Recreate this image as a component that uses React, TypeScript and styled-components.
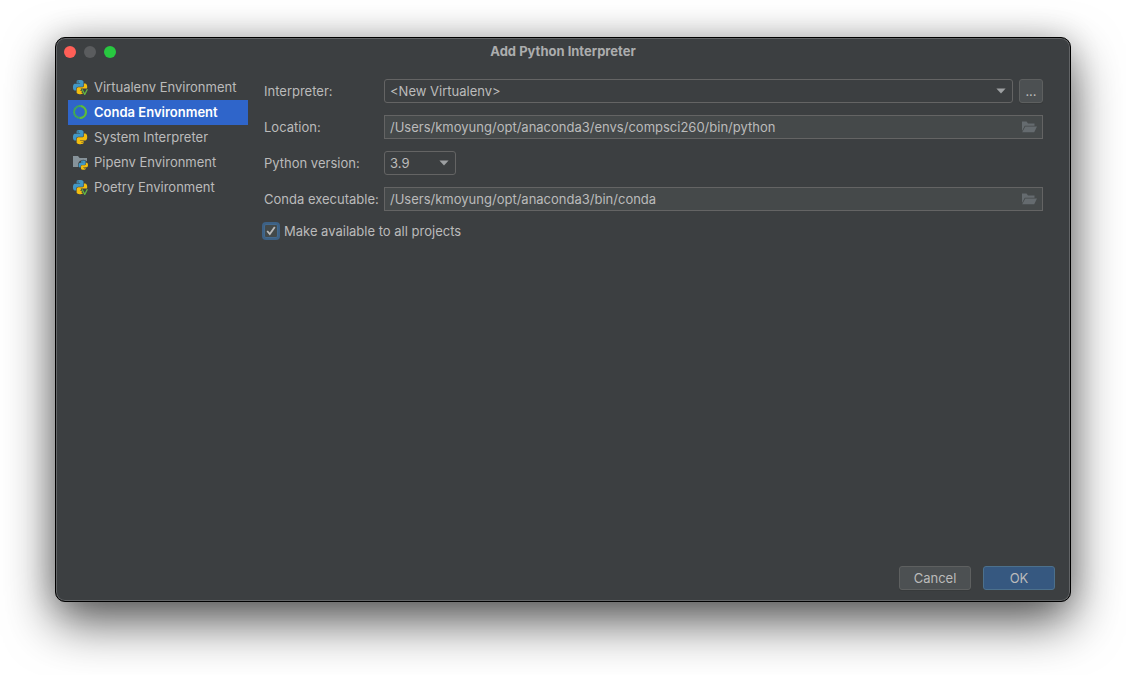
import React from "react";
import styled, { createGlobalStyle, css } from "styled-components";

const GlobalStyle = createGlobalStyle`
  * { box-sizing: border-box; }
  body {
    margin: 0;
    background: #ffffff;
    color: #bbbbbb;
    font: 13px/16px Inter, "Liberation Sans", sans-serif;
  }
  button, input, select { font: inherit; color: inherit; margin: 0; }
`;

const Desktop = styled.div`
  display: flex;
  min-height: 100vh;
  padding: 37px 55px 73px;
`;

const Dialog = styled.main`
  flex: 1;
  display: flex;
  flex-direction: column;
  border: 1px solid #000000;
  border-radius: 10px;
  background: #3c3f41;
  box-shadow: inset 0 0 0 1px #636567, 0 20px 50px rgba(0, 0, 0, 0.65), 0 0 30px rgba(0, 0, 0, 0.16);
`;

const TitleBar = styled.header`
  display: grid;
  grid-template-columns: 1fr auto 1fr;
  align-items: center;
  height: 28px;
  padding: 0 8px;
`;

const WindowControls = styled.div`
  display: flex;
  gap: 8px;
`;

const WindowButton = styled.button<{ $color: string }>`
  width: 12px;
  height: 12px;
  padding: 0;
  border: 0;
  border-radius: 50%;
  background: ${(p) => p.$color};
`;

const Title = styled.h1`
  margin: 0;
  padding-bottom: 2px;
  font-size: 13px;
  line-height: 16px;
  font-weight: 700;
  color: #acadae;
`;

const Body = styled.div`
  flex: 1;
  display: flex;
  gap: 16px;
  padding: 9px 27px 0 12px;
`;

const Sidebar = styled.nav`
  flex: none;
  width: 180px;
  display: flex;
  flex-direction: column;
`;

const SidebarItem = styled.button<{ $selected?: boolean }>`
  display: flex;
  align-items: center;
  gap: 6px;
  height: 25px;
  padding: 0 4px 1px;
  border: 0;
  background: ${(p) => (p.$selected ? "#2f65ca" : "transparent")};
  color: ${(p) => (p.$selected ? "#ffffff" : "#bbbbbb")};
  font-weight: ${(p) => (p.$selected ? 600 : 400)};
  text-align: left;
  white-space: nowrap;
`;

const Form = styled.form`
  flex: 1;
  display: flex;
  flex-direction: column;
  gap: 12px;
  padding-top: 4px;
`;

const FormRow = styled.div`
  display: grid;
  grid-template-columns: 120px 1fr;
  align-items: center;
  height: 24px;
`;

const Label = styled.label`
  white-space: nowrap;
`;

const FieldGroup = styled.div`
  display: flex;
  gap: 6px;
`;

const SelectBox = styled.div<{ $compact?: boolean }>`
  display: grid;
  align-items: center;
  height: 24px;
  ${(p) => (p.$compact ? css`width: 72px;` : css`flex: 1;`)}

  > * { grid-area: 1 / 1; }
  > svg {
    justify-self: end;
    margin-right: 7px;
    pointer-events: none;
  }
`;

const Select = styled.select`
  appearance: none;
  width: 100%;
  height: 24px;
  padding: 0 20px 0 5px;
  border: 1px solid #646464;
  border-radius: 3px;
  background: #3c3f41;
  outline: none;
`;

const PathField = styled.div`
  flex: 1;
  display: flex;
  align-items: center;
  height: 24px;
  border: 1px solid #646464;
  background: #45494a;
`;

const PathInput = styled.input`
  flex: 1;
  min-width: 0;
  height: 22px;
  padding: 0 5px;
  border: 0;
  background: transparent;
  outline: none;
`;

const BrowseButton = styled.button`
  display: flex;
  padding: 0 5px;
  border: 0;
  background: transparent;
`;

const Button = styled.button<{ $primary?: boolean; $square?: boolean }>`
  width: ${(p) => (p.$square ? 24 : 72)}px;
  height: 24px;
  padding: 0;
  border: 1px solid ${(p) => (p.$primary ? "#4c708c" : "#5e6060")};
  border-radius: 3px;
  background: ${(p) => (p.$primary ? "#365880" : "#4c5052")};
  box-shadow: 0 1px 0 ${(p) => (p.$primary ? "transparent" : "#373a3b")};
`;

const CheckRow = styled.label`
  display: flex;
  align-items: center;
  gap: 6px;
  height: 16px;
`;

const CheckBox = styled.span`
  display: grid;
  place-items: center;
  width: 14px;
  height: 14px;

  > * { grid-area: 1 / 1; }
  > svg { pointer-events: none; }
`;

const CheckInput = styled.input`
  appearance: none;
  width: 14px;
  height: 14px;
  border: 1px solid #43698e;
  border-radius: 2px;
  background: #43494a;
  box-shadow: 0 0 0 2px #3d6185;
`;

const Footer = styled.footer`
  display: flex;
  justify-content: flex-end;
  gap: 12px;
  padding: 0 15px 11px;
`;

const SNAKE =
  "M14.25.18l.9.2.73.26.59.3.45.32.34.34.25.34.16.33.1.3.04.26.02.2-.01.13V8.5l-.05.63-.13.55-.21.46-.26.38-.3.31-.33.25-.35.19-.35.14-.33.1-.3.07-.26.04-.21.02H8.77l-.69.05-.59.14-.5.22-.41.27-.33.32-.27.35-.2.36-.15.37-.1.35-.07.32-.04.27-.02.21v3.06H3.17l-.21-.03-.28-.07-.32-.12-.35-.18-.36-.26-.36-.36-.35-.46-.32-.59-.28-.73-.21-.88-.14-1.05-.05-1.23.06-1.22.16-1.04.24-.87.32-.71.36-.57.4-.44.42-.33.42-.24.4-.16.36-.1.32-.05.24-.01h.16l.06.01h8.16v-.83H6.18l-.01-2.75-.02-.37.05-.34.11-.31.17-.28.25-.26.31-.23.38-.2.44-.18.51-.15.58-.12.64-.1.71-.06.77-.04.84-.02 1.27.05z";

function Snakes() {
  return (
    <>
      <path d={SNAKE} fill="#4197c4" />
      <path d={SNAKE} fill="#f2bd0e" transform="rotate(180 12 12)" />
      <circle cx="8.6" cy="3.2" r="1" fill="#3c3f41" />
      <circle cx="15.4" cy="20.8" r="1" fill="#3c3f41" />
    </>
  );
}

function PythonIcon() {
  return (
    <svg width="16" height="16" viewBox="0 0 16 16" aria-hidden="true">
      <g transform="translate(1 1) scale(0.59)"><Snakes /></g>
    </svg>
  );
}

function VirtualenvIcon() {
  return (
    <svg width="16" height="16" viewBox="0 0 16 16" aria-hidden="true">
      <g transform="translate(1 1) scale(0.59)"><Snakes /></g>
      <path d="M8.6 9.4H16V16h-4.8z" fill="#3c3f41" />
      <path d="M10 10.2l2.7 5.2 2.7-5.2" fill="none" stroke="#62b543" strokeWidth="1.3" />
    </svg>
  );
}

function CondaIcon() {
  return (
    <svg width="16" height="16" viewBox="0 0 16 16" aria-hidden="true">
      <circle cx="8" cy="8" r="6" fill="none" stroke="#43b049" strokeWidth="2" />
      <path d="M7 14A6 6 0 0 1 7 2" fill="none" stroke="#2f65ca" strokeWidth="2.2" strokeDasharray="0.8 1.6" opacity="0.6" />
      <path d="M9 2.1A6 6 0 0 1 8 14" fill="none" stroke="#5fba3d" strokeWidth="2" />
    </svg>
  );
}

function PipenvIcon() {
  return (
    <svg width="16" height="16" viewBox="0 0 16 16" aria-hidden="true">
      <path d="M1 2h5l1.6 2H15v9H1z" fill="#87939a" />
      <circle cx="11.2" cy="11" r="5.2" fill="#3c3f41" />
      <g transform="translate(6.6 6.4) scale(0.39)"><Snakes /></g>
    </svg>
  );
}

function FolderIcon() {
  return (
    <svg width="16" height="16" viewBox="0 0 16 16" aria-hidden="true">
      <path d="M1 12V2.5h4.5l1.5 2h6.5v2.3H3.8z" fill="#656b6f" />
      <path d="M4.3 7.6H16L13.2 13.3H1.2z" fill="#656b6f" />
    </svg>
  );
}

function Arrow() {
  return (
    <svg width="10" height="6" viewBox="0 0 10 6" aria-hidden="true">
      <path d="M0.4 0.5h9.2L5 5.5z" fill="#9da0a2" />
    </svg>
  );
}

function PathRow({ id, label, value }: { id: string; label: string; value: string }) {
  return (
    <FormRow>
      <Label htmlFor={id}>{label}</Label>
      <PathField>
        <PathInput id={id} type="text" defaultValue={value} />
        <BrowseButton type="button" aria-label="Browse"><FolderIcon /></BrowseButton>
      </PathField>
    </FormRow>
  );
}

const ENVIRONMENTS = [
  { name: "Virtualenv Environment", Icon: VirtualenvIcon },
  { name: "Conda Environment", Icon: CondaIcon },
  { name: "System Interpreter", Icon: PythonIcon },
  { name: "Pipenv Environment", Icon: PipenvIcon },
  { name: "Poetry Environment", Icon: VirtualenvIcon },
];

export default function App() {
  return (
    <>
      <GlobalStyle />
      <Desktop>
        <Dialog>
          <TitleBar>
            <WindowControls>
              <WindowButton type="button" $color="#ff5f57" aria-label="Close" />
              <WindowButton type="button" $color="#5a5c5e" aria-label="Minimize" />
              <WindowButton type="button" $color="#28c840" aria-label="Zoom" />
            </WindowControls>
            <Title>Add Python Interpreter</Title>
          </TitleBar>
          <Body>
            <Sidebar>
              {ENVIRONMENTS.map(({ name, Icon }, i) => (
                <SidebarItem key={name} type="button" $selected={i === 1}>
                  <Icon />
                  {name}
                </SidebarItem>
              ))}
            </Sidebar>
            <Form>
              <FormRow>
                <Label htmlFor="interpreter">Interpreter:</Label>
                <FieldGroup>
                  <SelectBox>
                    <Select id="interpreter"><option>&lt;New Virtualenv&gt;</option></Select>
                    <Arrow />
                  </SelectBox>
                  <Button type="button" $square>...</Button>
                </FieldGroup>
              </FormRow>
              <PathRow id="location" label="Location:" value="/Users/kmoyung/opt/anaconda3/envs/compsci260/bin/python" />
              <FormRow>
                <Label htmlFor="version">Python version:</Label>
                <SelectBox $compact>
                  <Select id="version"><option>3.9</option></Select>
                  <Arrow />
                </SelectBox>
              </FormRow>
              <PathRow id="conda" label="Conda executable:" value="/Users/kmoyung/opt/anaconda3/bin/conda" />
              <CheckRow>
                <CheckBox>
                  <CheckInput type="checkbox" defaultChecked />
                  <svg width="14" height="14" viewBox="0 0 14 14" aria-hidden="true">
                    <path d="M3.2 7l2.6 3 5-7" fill="none" stroke="#bbbbbb" strokeWidth="1.8" />
                  </svg>
                </CheckBox>
                Make available to all projects
              </CheckRow>
            </Form>
          </Body>
          <Footer>
            <Button type="button">Cancel</Button>
            <Button type="button" $primary>OK</Button>
          </Footer>
        </Dialog>
      </Desktop>
    </>
  );
}
